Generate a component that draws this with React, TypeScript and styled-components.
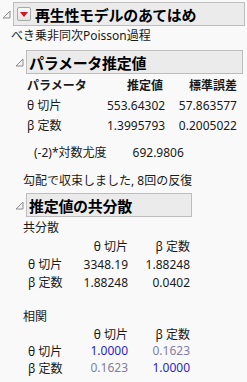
import React from "react";
import styled, { createGlobalStyle } from "styled-components";

const GlobalStyle = createGlobalStyle`
  html, body {
    margin: 0;
    padding: 0;
    background: #f9f9f9;
  }
  body {
    font-family: "Noto Sans", "Noto Sans CJK JP", sans-serif;
    font-size: 12px;
    color: #1a1a1a;
  }
`;

const Page = styled.div`
  width: 247px;
  height: 382px;
  overflow: hidden;
  padding-top: 2px;
  box-sizing: border-box;
`;

const OutlineRow = styled.div<{ $indent: number; $top?: number }>`
  display: flex;
  align-items: center;
  padding-left: ${(p) => p.$indent}px;
  margin-top: ${(p) => p.$top ?? 0}px;
`;

const Toggle = styled.svg`
  width: 9px;
  height: 9px;
  margin-right: 2px;
  flex: none;
`;

const HeaderBox = styled.div<{ $width: number }>`
  display: flex;
  align-items: center;
  width: ${(p) => p.$width}px;
  height: 24px;
  box-sizing: border-box;
  border: 1px solid #bdbdbd;
  background: #ebebeb;
  padding-left: 2px;
  font-weight: bold;
  font-size: 15px;
  color: #000;
  letter-spacing: -0.3px;
`;

const RedButton = styled.span`
  display: inline-flex;
  align-items: center;
  justify-content: center;
  width: 12px;
  height: 12px;
  margin: 0 4px 0 1px;
  border: 1px solid #a9a9a9;
  border-radius: 2px;
  background: linear-gradient(#fbfbfb, #e4e4e4);
  flex: none;
`;

const Line = styled.div<{ $left: number; $top: number }>`
  padding-left: ${(p) => p.$left}px;
  margin-top: ${(p) => p.$top}px;
  line-height: 16px;
  white-space: nowrap;
`;

const Grid = styled.div<{ $cols: string; $left: number; $top: number; $row: number }>`
  display: grid;
  grid-template-columns: ${(p) => p.$cols};
  grid-auto-rows: ${(p) => p.$row}px;
  align-items: center;
  margin-left: ${(p) => p.$left}px;
  margin-top: ${(p) => p.$top}px;
  white-space: nowrap;
`;

const Cell = styled.div<{ $right?: boolean; $head?: boolean; $tone?: "strong" | "weak" }>`
  text-align: ${(p) => (p.$right ? "right" : "left")};
  font-weight: ${(p) => (p.$head ? "bold" : "normal")};
  color: ${(p) =>
    p.$tone === "strong" ? "#2a1fd4" : p.$tone === "weak" ? "#7f7fa6" : "inherit"};
`;

const LikeRow = styled.div`
  display: flex;
  margin: 10px 0 0 34px;
  line-height: 16px;
  white-space: nowrap;
  span + span {
    margin-left: 26px;
  }
`;

const Tri = () => (
  <Toggle viewBox="0 0 9 9">
    <polygon points="8,1 8,8 1,8" fill="#f3f3f3" stroke="#8d8d8d" strokeWidth="1" />
  </Toggle>
);

export default function App() {
  return (
    <Page>
      <GlobalStyle />
      <OutlineRow $indent={2}>
        <Tri />
        <HeaderBox $width={232}>
          <RedButton>
            <svg width="8" height="5" viewBox="0 0 8 5">
              <polygon points="0,0 8,0 4,5" fill="#d8141e" />
            </svg>
          </RedButton>
          再生性モデルのあてはめ
        </HeaderBox>
      </OutlineRow>
      <Line $left={11} $top={2}>べき乗非同次Poisson過程</Line>

      <OutlineRow $indent={15} $top={6}>
        <Tri />
        <HeaderBox $width={217}>パラメータ推定値</HeaderBox>
      </OutlineRow>
      <Grid $cols="80px 56px 74px" $left={27} $top={1} $row={20}>
        <Cell $head>パラメータ</Cell>
        <Cell $right $head>推定値</Cell>
        <Cell $right $head>標準誤差</Cell>
        <Cell>θ 切片</Cell>
        <Cell $right>553.64302</Cell>
        <Cell $right>57.863577</Cell>
        <Cell>β 定数</Cell>
        <Cell $right>1.3995793</Cell>
        <Cell $right>0.2005022</Cell>
      </Grid>
      <LikeRow>
        <span>(-2)*対数尤度</span>
        <span>692.9806</span>
      </LikeRow>
      <Line $left={23} $top={12}>勾配で収束しました, 8回の反復</Line>

      <OutlineRow $indent={15} $top={4}>
        <Tri />
        <HeaderBox $width={166}>推定値の共分散</HeaderBox>
      </OutlineRow>
      <Line $left={23} $top={3}>共分散</Line>
      <Grid $cols="50px 50px 62px" $left={28} $top={1} $row={18}>
        <Cell />
        <Cell $right>θ 切片</Cell>
        <Cell $right>β 定数</Cell>
        <Cell>θ 切片</Cell>
        <Cell $right>3348.19</Cell>
        <Cell $right>1.88248</Cell>
        <Cell>β 定数</Cell>
        <Cell $right>1.88248</Cell>
        <Cell $right>0.0402</Cell>
      </Grid>
      <Line $left={23} $top={18}>相関</Line>
      <Grid $cols="50px 50px 62px" $left={28} $top={0} $row={17}>
        <Cell />
        <Cell $right>θ 切片</Cell>
        <Cell $right>β 定数</Cell>
        <Cell>θ 切片</Cell>
        <Cell $right $tone="strong">1.0000</Cell>
        <Cell $right $tone="weak">0.1623</Cell>
        <Cell>β 定数</Cell>
        <Cell $right $tone="weak">0.1623</Cell>
        <Cell $right $tone="strong">1.0000</Cell>
      </Grid>
    </Page>
  );
}
